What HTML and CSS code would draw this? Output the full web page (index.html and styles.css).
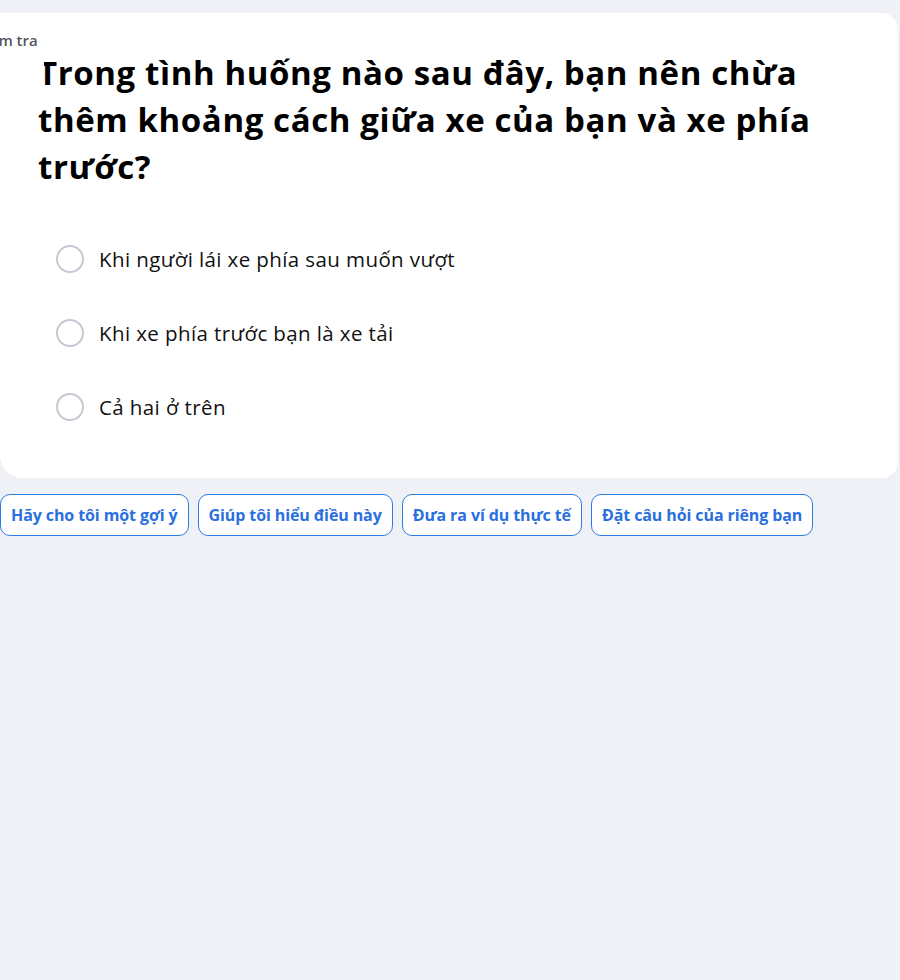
FILE: index.html
```html
<!DOCTYPE html>
<html lang="vi">
<head>
<meta charset="utf-8">
<link rel="stylesheet" href="styles.css">
</head>
<body>
<div class="page">
  <section class="card">
    <div class="label">Kiểm tra</div>
    <h1 class="question"><span class="mask"></span>Trong tình huống nào sau đây, bạn nên chừa thêm khoảng cách giữa xe của bạn và xe phía trước?</h1>
    <ul class="options">
      <li class="option"><span class="radio"></span><span class="opt-text">Khi người lái xe phía sau muốn vượt</span></li>
      <li class="option"><span class="radio"></span><span class="opt-text">Khi xe phía trước bạn là xe tải</span></li>
      <li class="option"><span class="radio"></span><span class="opt-text">Cả hai ở trên</span></li>
    </ul>
  </section>
  <div class="actions">
    <button class="chip">Hãy cho tôi một gợi ý</button>
    <button class="chip">Giúp tôi hiểu điều này</button>
    <button class="chip">Đưa ra ví dụ thực tế</button>
    <button class="chip">Đặt câu hỏi của riêng bạn</button>
  </div>
</div>
</body>
</html>
```
FILE: styles.css
```css
html, body {
  margin: 0;
  padding: 0;
  background: #f0f1f6;
  overflow: hidden;
  font-family: "Open Sans", "Noto Sans", sans-serif;
}
.page {
  padding-top: 13px;
  width: 900px;
}
.card {
  background: #ffffff;
  width: 898px;
  height: 465px;
  box-sizing: border-box;
  border-radius: 0 16px 16px 22px;
  padding: 20px 0 0 0;
  overflow: hidden;
}
.label {
  margin-left: -24px;
  font-size: 15px;
  font-weight: 600;
  color: #555560;
  line-height: 14px;
}
.question {
  position: relative;
  margin: 2px 0 0 38px;
  width: 800px;
  font-size: 33px;
  letter-spacing: 0.6px;
  font-weight: 700;
  line-height: 47px;
  color: #000000;
}
.mask {
  position: absolute;
  z-index: 1;
  left: -8px;
  top: 6px;
  width: 14px;
  height: 14px;
  background: #ffffff;
}
.options {
  list-style: none;
  margin: 55px 0 0 56px;
  padding: 0;
  display: flex;
  flex-direction: column;
  gap: 46px;
}
.option {
  display: flex;
  align-items: center;
  gap: 15px;
  height: 28px;
}
.radio {
  width: 24px;
  height: 24px;
  border: 2px solid #c8c8d4;
  border-radius: 50%;
  flex: none;
}
.opt-text {
  font-size: 20.5px;
  letter-spacing: 0.4px;
  color: #111111;
}
.actions {
  display: flex;
  gap: 9px;
  margin-top: 16px;
}
.chip {
  height: 42px;
  padding: 0 10px;
  background: #ffffff;
  border: 1px solid #2a7de1;
  border-radius: 10px;
  color: #2a6fe0;
  font-family: inherit;
  font-size: 16px;
  letter-spacing: -0.1px;
  font-weight: 700;
}
```
